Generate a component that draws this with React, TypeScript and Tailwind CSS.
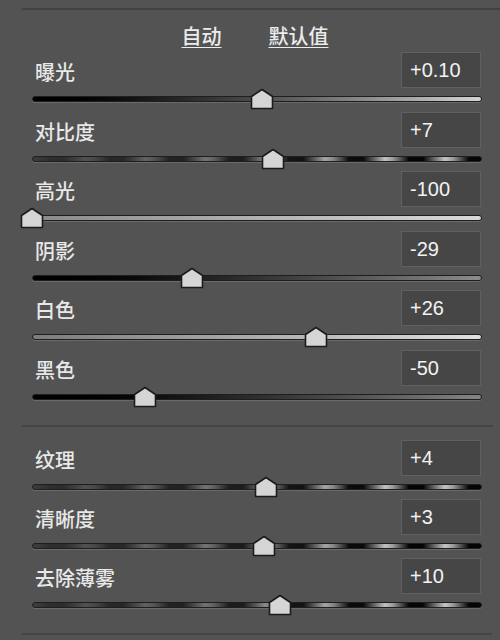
import React from 'react'

interface SliderRow {
  label: string;
  value: number;
  min: number;
  max: number;
  display: string;
  track: string;
}

const BLOB_TRACK =
  'bg-[image:linear-gradient(to_right,rgba(52,52,52,0.9),rgba(52,52,52,0.5)_45%,rgba(52,52,52,0)_80%),repeating-linear-gradient(90deg,#9a9a9a_0px,#050505_16px,#050505_30px,#c4c4c4_52px,#9a9a9a_60px)]';

const basicRows: SliderRow[] = [
  { label: '曝光', value: 0.1, min: -5, max: 5, display: '+0.10', track: 'bg-linear-to-r from-black via-[#4c4c4c] to-[#d4d4d4]' },
  { label: '对比度', value: 7, min: -100, max: 100, display: '+7', track: BLOB_TRACK },
  { label: '高光', value: -100, min: -100, max: 100, display: '-100', track: 'bg-linear-to-r from-[#8a8a8a] to-[#dadada]' },
  { label: '阴影', value: -29, min: -100, max: 100, display: '-29', track: 'bg-linear-to-r from-black via-[#333333] to-[#8c8c8c]' },
  { label: '白色', value: 26, min: -100, max: 100, display: '+26', track: 'bg-linear-to-r from-[#7c7c7c] to-[#e0e0e0]' },
  { label: '黑色', value: -50, min: -100, max: 100, display: '-50', track: 'bg-linear-to-r from-black via-[#2e2e2e] to-[#858585]' },
];

const presenceRows: SliderRow[] = [
  { label: '纹理', value: 4, min: -100, max: 100, display: '+4', track: BLOB_TRACK },
  { label: '清晰度', value: 3, min: -100, max: 100, display: '+3', track: BLOB_TRACK },
  { label: '去除薄雾', value: 10, min: -100, max: 100, display: '+10', track: BLOB_TRACK },
];

const Thumb: React.FC<{ pct: number }> = ({ pct }) => (
  <svg
    width="24"
    height="22"
    viewBox="0 0 24 22"
    className="absolute top-[-8px]"
    style={{ left: `calc(${pct}% - 12px)` }}
  >
    <polygon
      points="1.5,8.5 12,1.5 22.5,8.5 22.5,20.5 1.5,20.5"
      fill="#d5d5d5"
      stroke="#1b1b1b"
      strokeWidth="1.6"
      strokeLinejoin="round"
    />
  </svg>
);

const Row: React.FC<{ row: SliderRow; height: string }> = ({ row, height }) => {
  const pct = ((row.value - row.min) / (row.max - row.min)) * 100;

  return (
    <div className={`flex flex-col ${height}`}>
      <div className="flex items-center justify-between h-[36px]">
        <span className="pl-[3px] mt-[4px] text-[20px] font-medium leading-none text-[#e8e8e8]">
          {row.label}
        </span>
        <div className="w-[80px] h-[36px] mr-[1px] flex items-center pl-[8px] bg-[#464646] border border-[#606060] text-[20px] text-[#f2f2f2] font-['Liberation_Sans',Arial,sans-serif]">
          {row.display}
        </div>
      </div>
      <div className="relative mt-[8px] h-[6px]">
        <div className={`h-full rounded-full border border-[#1e1e1e] shadow-[0_1px_0_#6a6a6a] ${row.track}`} />
        <Thumb pct={pct} />
      </div>
    </div>
  );
};

export default function App() {
  return (
    <div className="w-[500px] h-[640px] bg-[#535353] pt-[8px] font-['Noto_Sans_CJK_SC','Noto_Sans',sans-serif] overflow-hidden">
      <div className="ml-[22px] border-t-2 border-[#424242]">
        <div className="flex justify-center gap-[47px] pt-[14px] h-[42px] pr-[12px] text-[20px] font-medium leading-[24px] text-[#ececec]">
          <span className="underline underline-offset-[3px] decoration-1">自动</span>
          <span className="underline underline-offset-[3px] decoration-1">默认值</span>
        </div>
      </div>

      <div className="pl-[32px] pr-[18px]">
        {basicRows.map((row) => (
          <Row key={row.label} row={row} height="h-[59.5px]" />
        ))}
      </div>

      <div className="ml-[22px] mr-[7px] mt-[16px] border-t-2 border-[#454545]" />

      <div className="pl-[32px] pr-[18px] pt-[13px]">
        {presenceRows.map((row) => (
          <Row key={row.label} row={row} height="h-[59px]" />
        ))}
      </div>

      <div className="ml-[22px] mr-[8px] mt-[16px] border-t-2 border-[#454545]" />
    </div>
  );
}
